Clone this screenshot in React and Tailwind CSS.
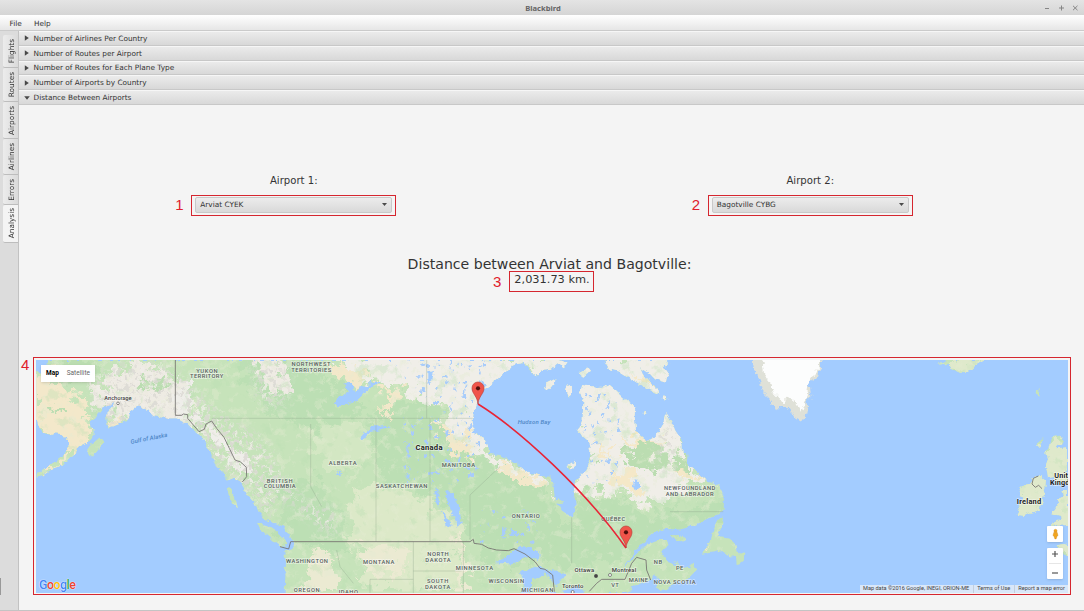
import React from 'react';

const TABS = [
  { name: 'Flights', size: 'h-[33px]' },
  { name: 'Routes', size: 'h-[34px]' },
  { name: 'Airports', size: 'h-[37px]' },
  { name: 'Airlines', size: 'h-[36px]' },
  { name: 'Errors', size: 'h-[30px]' },
  { name: 'Analysis', size: 'h-[38px]' },
];

const PANES = [
  'Number of Airlines Per Country',
  'Number of Routes per Airport',
  'Number of Routes for Each Plane Type',
  'Number of Airports by Country',
  'Distance Between Airports',
];

const MAINLAND =
  'M85 30 L78 62 L60 68 L48 60 L48 200 L62 245 L90 256 L105 250 L125 252 L145 275 L146 300 L128 318 L105 335 L80 355 L50 372 L50 384 L75 372 L100 355 L130 345 L150 322 L168 312 L170 292 L200 282 L224 250 L216 238 L212 212 L232 195 L246 178 L270 165 L283 154 L277 172 L262 188 L256 205 L262 236 L290 225 L322 212 L328 185 L350 168 L384 180 L400 198 L440 205 L470 205 L500 222 L520 242 L548 262 L560 290 L580 322 L590 348 L612 372 L620 392 L640 385 L665 398 L676 430 L700 455 L716 485 L735 510 L765 520 L790 530 L812 560 L822 590 L806 600 L792 600 L798 640 L794 729 L1826 729 L1838 712 L1860 700 L1895 690 L1900 676 L1925 690 L1908 705 L1918 726 L1938 720 L1960 698 L2000 690 L2030 660 L2018 635 L2008 655 L1985 662 L1968 645 L1942 635 L1930 612 L1926 600 L1946 585 L1938 570 L1910 570 L1880 582 L1855 605 L1838 626 L1810 655 L1848 600 L1878 568 L1905 545 L1935 537 L1985 538 L2020 526 L2060 507 L2095 492 L2110 480 L2112 442 L2095 405 L2070 398 L2040 375 L2018 355 L2000 345 L2002 315 L1985 300 L1984 270 L1965 240 L1956 215 L1940 190 L1930 205 L1926 232 L1908 258 L1885 272 L1862 262 L1848 238 L1844 195 L1846 168 L1810 145 L1790 125 L1766 105 L1740 114 L1688 102 L1680 125 L1690 158 L1688 208 L1672 245 L1704 272 L1712 310 L1704 350 L1685 375 L1665 392 L1662 430 L1668 470 L1655 502 L1630 488 L1605 450 L1600 400 L1590 380 L1560 378 L1520 364 L1480 338 L1440 315 L1405 312 L1402 290 L1390 262 L1362 250 L1358 212 L1362 180 L1378 155 L1372 130 L1405 110 L1435 85 L1470 50 L1490 42 L1520 38 L1535 30 Z';

const ISLANDS = [
  'M202 300 L212 285 L240 262 L250 275 L235 300 L215 320 Z',
  'M620 415 L640 418 L645 440 L654 475 L640 465 L628 445 Z',
  'M713 518 L745 528 L770 545 L797 570 L800 595 L770 580 L745 558 L722 540 Z',
  'M575 300 L595 310 L612 345 L630 380 L615 378 L595 345 L575 325 Z',
  'M1510 30 L1526 58 L1552 80 L1562 60 L1596 56 L1612 40 L1632 52 L1640 38 L1615 30 Z',
  'M1572 115 L1580 98 L1606 85 L1604 102 L1588 120 Z',
  'M1638 120 L1642 106 L1656 112 L1656 132 L1646 140 Z',
  'M1676 70 L1690 62 L1700 50 L1710 62 L1690 80 Z',
  'M1752 30 L1768 58 L1800 66 L1835 88 L1870 110 L1915 132 L1912 118 L1890 98 L1868 72 L1860 52 L1888 70 L1905 88 L1938 98 L1942 80 L1945 60 L1930 50 L1946 38 L1942 30 Z',
  'M1868 190 L1873 180 L1880 188 L1874 198 Z',
  'M1928 145 L1935 135 L1942 148 L1936 153 Z',
  'M1604 450 L1612 445 L1630 455 L1625 462 L1610 460 Z',
  'M1642 348 L1664 332 L1668 344 L1650 358 Z',
  'M1950 555 L1975 556 L1998 568 L1985 574 L1960 566 Z',
  'M1962 630 L1988 655 L2002 650 L2000 664 L1980 662 Z',
  'M2100 502 L2112 500 L2104 535 L2090 560 L2130 566 L2145 582 L2150 605 L2170 608 L2168 638 L2150 642 L2148 620 L2124 618 L2110 600 L2075 608 L2046 614 L2058 594 L2072 572 L2080 540 Z',
  'M2755 44 L2780 30 L2895 30 L2870 44 L2845 64 L2820 68 L2792 55 L2785 42 Z',
  'M3048 122 L3062 114 L3060 130 L3056 150 L3052 132 Z',
  'M3050 282 L3070 264 L3066 280 L3056 294 Z',
  'M3092 265 L3112 262 L3130 258 L3128 275 L3108 295 L3144 292 L3144 400 L3110 400 L3105 380 L3084 385 L3082 370 L3078 350 L3084 325 L3078 305 L3088 290 Z',
  'M3144 420 L3128 420 L3132 440 L3108 448 L3115 462 L3094 490 L3125 498 L3120 510 L3080 530 L3144 524 Z',
  'M3035 385 L3060 378 L3078 392 L3076 412 L3070 440 L3062 480 L3030 488 L3010 498 L2990 494 L3000 475 L2996 460 L3010 448 L2996 425 L3004 408 L3030 405 Z',
  'M3110 586 L3132 582 L3144 586 L3144 620 L3125 610 Z',
];

const GREENLAND =
  'M2197 30 L2205 70 L2220 90 L2225 125 L2250 150 L2265 178 L2285 170 L2310 178 L2325 200 L2345 213 L2358 195 L2364 165 L2362 150 L2374 140 L2370 110 L2362 98 L2385 90 L2392 68 L2405 50 L2405 20 L2197 20 Z';

const WATER = [
  'M938 165 L955 142 L985 128 L970 100 L985 95 L1005 120 L1030 112 L1055 96 L1082 92 L1075 102 L1045 112 L1020 142 L985 165 Z',
  'M1020 265 L1030 250 L1070 225 L1085 222 L1112 232 L1088 240 L1050 246 L1028 270 Z',
  'M1275 430 L1298 422 L1315 455 L1325 520 L1312 530 L1298 490 L1282 460 Z',
  'M1248 410 L1255 430 L1258 470 L1245 460 Z',
  'M1262 480 L1274 492 L1295 530 L1285 535 Z',
  'M1470 610 L1500 590 L1530 594 L1560 608 L1556 630 L1520 625 L1480 640 L1425 640 Z',
  'M1475 538 L1485 538 L1488 555 L1478 562 Z',
  'M1500 665 L1540 650 L1580 655 L1568 675 L1540 690 L1530 729 L1505 729 L1510 690 Z',
  'M1565 655 L1605 662 L1640 675 L1620 690 L1610 720 L1598 690 L1575 675 Z',
  'M1625 722 L1665 712 L1700 724 L1690 729 L1625 729 Z',
  'M1222 70 L1242 62 L1235 95 L1222 90 Z',
  'M1838 402 L1852 390 L1860 405 L1848 422 Z',
  'M950 368 L972 370 L965 375 L948 373 Z',
  'M1160 380 L1172 378 L1170 385 L1160 386 Z',
];

function Terrain() {
  return (
    <g clipPath="url(#land)">
      <rect x="48" y="30" width="3096" height="699" fill="#c6e3ba" />
      <g filter="url(#rough)">
        {/* dry plains */}
        <path fill="#dce9c8" d="M1000 410 L1100 400 L1200 440 L1300 500 L1340 560 L1300 600 L1330 729 L1050 729 L1000 580 L980 480 Z" />
        <path fill="#d3e7c3" d="M860 230 L1050 225 L1050 310 L1000 370 L900 330 Z" />
        <path fill="#ebead2" d="M875 600 L930 600 L960 640 L930 729 L840 729 Z M1030 590 L1120 590 L1160 640 L1100 690 L1010 650 Z M1310 560 L1330 560 L1340 729 L1310 729 Z" />
        {/* forests */}
        <path fill="#bcdfb4" d="M640 20 L820 20 L930 90 L1060 200 L860 230 L760 190 L700 150 Z M1100 160 L1250 130 L1250 240 L1400 330 L1560 410 L1610 500 L1700 560 L1700 660 L1400 640 L1330 500 L1200 420 L1080 380 L1060 250 Z M760 420 L900 390 L960 520 L990 620 L940 590 L850 590 L780 520 Z M1670 430 L1760 420 L1850 490 L2000 470 L2120 450 L2110 500 L1880 560 L1820 640 L1680 640 Z" />
        {/* tundra */}
        <path fill="#f0eee8" d="M955 10 L1560 10 L1440 100 L1370 170 L1365 240 L1420 310 L1560 370 L1600 410 L1480 380 L1390 320 L1250 230 L1270 170 L1190 140 L1060 90 L980 70 Z" />
        <path fill="#f0eee8" d="M1660 80 L1960 180 L2030 340 L2080 400 L1960 430 L1930 460 L1850 465 L1800 430 L1740 410 L1660 425 Z" />
        <path fill="#f0eee8" d="M1500 10 L1980 10 L1960 160 L1560 150 Z" />
        <path fill="#eeebe3" d="M270 80 L330 40 L410 50 L470 110 L540 170 L500 230 L380 210 L320 210 L270 150 L240 180 L210 150 Z M700 20 L800 20 L800 140 L740 120 Z" />
        <path fill="#efeeea" d="M500 180 L570 210 L640 290 L700 350 L670 370 L620 330 L550 250 Z M470 90 L510 130 L540 190 L480 210 Z" />
        {/* sandy lowlands */}
        <path fill="#f3e8ca" d="M30 90 L100 75 L160 115 L190 180 L225 240 L130 355 L40 390 L150 300 L70 250 L30 200 Z M250 200 L320 190 L310 230 L260 240 Z M915 35 L1010 55 L1040 95 L1000 105 L950 85 Z M1070 110 L1125 115 L1120 200 L1095 175 Z M1240 235 L1330 250 L1370 310 L1340 315 L1280 290 Z M1430 325 L1550 385 L1590 405 L1500 395 L1430 345 Z" />
        <path fill="#f5e8c8" d="M1820 255 L1920 275 L1900 295 L1860 295 Z M1790 350 L1850 360 L1860 420 L1830 440 L1795 390 Z M1980 350 L2040 365 L2040 400 L1990 390 Z M1730 300 L1790 270 L1780 285 L1745 310 Z M1850 70 L1900 100 L1890 120 L1860 100 Z M2050 604 L2080 598 L2075 610 Z" />
        <path fill="#bbddb1" d="M345 85 L400 80 L440 110 L420 130 L360 115 Z M95 175 L112 165 L118 200 L100 195 Z M130 20 L230 20 L190 90 L150 80 Z M1810 305 L1880 275 L1940 290 L1940 350 L1870 355 L1815 340 Z M1970 270 L2010 300 L2010 360 L1975 350 Z M1700 320 L1715 340 L1710 365 Z" />
        <path fill="#dfe9cb" d="M2970 350 L3180 230 L3180 640 L2970 520 Z M2740 20 L2910 20 L2860 90 Z" />
      </g>
      <rect x="48" y="30" width="3096" height="699" filter="url(#mottleLight)" />
      <rect x="48" y="30" width="3096" height="699" filter="url(#mottleGreen)" />
      <path filter="url(#relief)" d="M200 90 L300 40 H440 L600 190 L730 270 L800 400 L860 460 L950 480 V560 L900 530 L800 450 L760 460 V520 L700 450 L640 390 L480 230 L260 230 Z M690 30 H800 V170 L720 160 Z M1900 230 H1970 V370 H1930 Z" />
      <path filter="url(#lakes)" d="M1100 30 H1420 L1370 210 L1300 220 L1220 150 Z M1690 130 H1800 V400 H1690 Z M1150 200 H1380 V400 H1150 Z M1380 480 H1560 V580 H1380 Z" />
      <g fill="#a3ccff" filter="url(#roughFine)">
        {WATER.map((d) => <path key={d} d={d} />)}
      </g>
    </g>
  );
}

function Label({ x, y, w, children, size = 17.5, fill = '#56605b', anchor = 'middle', weight = 500, italic = false, rotate = 0 }) {
  return (
    <text
      x={x}
      y={y}
      textAnchor={anchor}
      fontSize={size}
      fontWeight={weight}
      fontStyle={italic ? 'italic' : 'normal'}
      fill={fill}
      textLength={w}
      transform={rotate ? `rotate(${rotate} ${x} ${y})` : undefined}
      stroke="#ffffff"
      strokeOpacity={italic ? 0 : 0.5}
      strokeWidth="4"
      paintOrder="stroke"
    >
      {children}
    </text>
  );
}

function Pin({ x, y }) {
  return (
    <g transform={`translate(${x} ${y})`}>
      <path d="M0 0 C-2 -24 -18 -30 -18 -48 A18 18 0 0 1 18 -48 C18 -30 2 -24 0 0 Z" fill="#f0544a" stroke="#b9403a" strokeWidth="2" />
      <circle cx="0" cy="-47" r="6.2" fill="#4f0f0b" />
    </g>
  );
}

function MapDrawing() {
  return (
    <svg viewBox="48 30 3096 699" preserveAspectRatio="none" className="block h-full w-full" fontFamily="Roboto, sans-serif">
      <defs>
        <clipPath id="land">
          <path d={MAINLAND} />
          {ISLANDS.map((d) => <path key={d} d={d} />)}
        </clipPath>
        <filter id="coast" x="0" y="0" width="1" height="1" colorInterpolationFilters="sRGB">
          <feTurbulence type="fractalNoise" baseFrequency="0.06" numOctaves="3" seed="3" result="n" />
          <feDisplacementMap in="SourceGraphic" in2="n" scale="16" xChannelSelector="R" yChannelSelector="G" />
        </filter>
        <filter id="rough" x="0" y="0" width="1" height="1" colorInterpolationFilters="sRGB">
          <feTurbulence type="fractalNoise" baseFrequency="0.024" numOctaves="5" seed="8" result="n" />
          <feDisplacementMap in="SourceGraphic" in2="n" scale="120" xChannelSelector="R" yChannelSelector="G" />
          <feGaussianBlur stdDeviation="2" />
        </filter>
        <filter id="roughFine" colorInterpolationFilters="sRGB">
          <feTurbulence type="fractalNoise" baseFrequency="0.06" numOctaves="2" seed="5" result="n" />
          <feDisplacementMap in="SourceGraphic" in2="n" scale="14" xChannelSelector="R" yChannelSelector="G" />
        </filter>
        <filter id="mottleLight" x="0" y="0" width="1" height="1" colorInterpolationFilters="sRGB">
          <feTurbulence type="fractalNoise" baseFrequency="0.035" numOctaves="4" seed="21" />
          <feColorMatrix values="0 0 0 0 0.89  0 0 0 0 0.92  0 0 0 0 0.82  7 0 0 0 -3.95" />
          <feComponentTransfer><feFuncA type="linear" slope="0.4" /></feComponentTransfer>
        </filter>
        <filter id="mottleGreen" x="0" y="0" width="1" height="1" colorInterpolationFilters="sRGB">
          <feTurbulence type="fractalNoise" baseFrequency="0.025" numOctaves="4" seed="46" />
          <feColorMatrix values="0 0 0 0 0.72  0 0 0 0 0.87  0 0 0 0 0.69  0 7 0 0 -4.1" />
          <feComponentTransfer><feFuncA type="linear" slope="0.35" /></feComponentTransfer>
        </filter>
        <filter id="relief" x="0" y="0" width="1" height="1" colorInterpolationFilters="sRGB">
          <feTurbulence type="fractalNoise" baseFrequency="0.07" numOctaves="3" seed="12" result="n" />
          <feColorMatrix in="n" values="0 0 0 0 0.86  0 0 0 0 0.85  0 0 0 0 0.83  9 0 0 0 -4.9" result="shade" />
          <feColorMatrix in="n" values="0 0 0 0 0.94  0 0 0 0 0.93  0 0 0 0 0.91  0 7 0 0 -3.8" result="snow" />
          <feMerge result="both"><feMergeNode in="snow" /><feMergeNode in="shade" /></feMerge>
          <feGaussianBlur in="SourceGraphic" stdDeviation="16" result="soft" />
          <feComposite in="both" in2="soft" operator="in" result="hills" />
          <feComponentTransfer in="hills"><feFuncA type="linear" slope="0.85" /></feComponentTransfer>
        </filter>
        <filter id="lakes" x="0" y="0" width="1" height="1" colorInterpolationFilters="sRGB">
          <feTurbulence type="fractalNoise" baseFrequency="0.07 0.055" numOctaves="2" seed="30" />
          <feColorMatrix values="0 0 0 0 0.66  0 0 0 0 0.80  0 0 0 0 0.98  0 0 14 0 -9.1" />
          <feComposite in2="SourceGraphic" operator="in" />
        </filter>
      </defs>
      <rect x="48" y="30" width="3096" height="699" fill="#a3ccff" />
      <g filter="url(#coast)">
        <Terrain />
        <g filter="url(#roughFine)">
          <path d={GREENLAND} fill="#dfe1d8" />
          <path d="M2225 20 L2232 70 L2250 95 L2262 130 L2290 160 L2305 140 L2325 155 L2345 185 L2358 150 L2366 100 L2380 78 L2400 40 L2400 20 Z" fill="#fcfdfd" />
        </g>
      </g>
      {/* keeps the shores solid along the frame's edges */}
      <path d="M48 72 V198" stroke="#e9e6cd" strokeWidth="6" />
      <path d="M800 727 H1500" stroke="#cfe4bf" strokeWidth="5" />

      {/* province and state lines */}
      <g fill="none" stroke="#8fa78d" strokeWidth="1.5" opacity="0.7">
        <path d="M575 205 H1358 M872 222 V410 L905 470 M1068 205 V575 M1230 205 V575 M1220 30 V205 M1350 435 L1440 350 M1350 435 V570 M1180 575 V729 M1180 663 H1325 M1050 688 H1180 M1050 688 V729 M1330 575 V729 M1655 502 V640 M1950 485 H2110 M950 600 L960 650 L1000 700" />
      </g>
      <g fill="none" stroke="#757371" strokeWidth="2.6">
        <path d="M466 30 V196 L485 196 L490 192 L503 194 L503 205 L520 225 L537 245 L553 238 L558 222 L575 213 L590 235 L612 262 L628 295 L645 330 L662 336 L679 352 L680 380 L667 396" />
        <path d="M780 590 L806 597 L812 575 H1350 L1360 568 L1362 580 L1385 583 L1405 594 L1430 600 L1465 602 L1482 596 L1515 612 L1545 635 L1560 655 L1575 658 L1598 675 L1603 725 M1708 724 L1730 700 L1745 688 H1815 L1835 640 L1850 622 L1878 630 L1880 660 L1892 690" />
        <path d="M3055 378 L3040 385 L3036 402 L3046 412 L3056 406 L3066 416" />
      </g>

      <g>
        <Label x={561} y={69} w={64}>YUKON</Label>
        <Label x={560} y={85} w={100}>TERRITORY</Label>
        <Label x={873} y={49} w={117}>NORTHWEST</Label>
        <Label x={874} y={65} w={120}>TERRITORIES</Label>
        <Label x={779} y={398} w={78}>BRITISH</Label>
        <Label x={779} y={414} w={96}>COLUMBIA</Label>
        <Label x={968} y={344} w={83}>ALBERTA</Label>
        <Label x={1145} y={415} w={155}>SASKATCHEWAN</Label>
        <Label x={1315} y={352} w={100}>MANITOBA</Label>
        <Label x={1517} y={505} w={84}>ONTARIO</Label>
        <Label x={1780} y={512} w={72}>QUÉBEC</Label>
        <Label x={2009} y={420} w={154}>NEWFOUNDLAND</Label>
        <Label x={2009} y={437} w={144}>AND LABRADOR</Label>
        <Label x={861} y={639} w={126}>WASHINGTON</Label>
        <Label x={1076} y={641} w={94}>MONTANA</Label>
        <Label x={1254} y={619} w={64}>NORTH</Label>
        <Label x={1254} y={635} w={76}>DAKOTA</Label>
        <Label x={1253} y={700} w={64}>SOUTH</Label>
        <Label x={1253} y={716} w={76}>DAKOTA</Label>
        <Label x={1363} y={661} w={112}>MINNESOTA</Label>
        <Label x={1459} y={700} w={107}>WISCONSIN</Label>
        <Label x={1552} y={726} w={96}>MICHIGAN</Label>
        <Label x={860} y={726} w={78}>OREGON</Label>
        <Label x={985} y={731} w={58}>IDAHO</Label>
        <Label x={1914} y={641} w={25}>NB</Label>
        <Label x={1979} y={661} w={22}>PE</Label>
        <Label x={1855} y={695} w={58}>MAINE</Label>
        <Label x={1785} y={710} w={23}>VT</Label>
        <Label x={1964} y={701} w={126}>NOVA SCOTIA</Label>
        <Label x={294} y={151} w={82} size={17.5} fill="#3b3b3b">Anchorage</Label>
        <Label x={1693} y={666} w={59} size={18} fill="#3b3b3b">Ottawa</Label>
        <Label x={1812} y={666} w={73} size={18} fill="#3b3b3b">Montreal</Label>
        <Label x={1658} y={715} w={64} size={18} fill="#3b3b3b">Toronto</Label>
        <Label x={1227} y={299} w={81} size={23} weight={700} fill="#1d1d1d">Canada</Label>
        <Label x={3027} y={461} w={73} size={22.5} weight={700} fill="#1d1d1d">Ireland</Label>
        <Label x={3103} y={383} w={66} size={22} weight={700} anchor="start" fill="#1d1d1d">United</Label>
        <Label x={3090} y={405} w={90} size={22} weight={700} anchor="start" fill="#1d1d1d">Kingdom</Label>
        <Label x={388} y={271} w={112} size={18} italic rotate={-11} fill="#4d86c6">Gulf of Alaska</Label>
        <Label x={1542} y={223} w={98} size={18} italic fill="#4d86c6">Hudson Bay</Label>
      </g>
      <g fill="#fff" stroke="#555" strokeWidth="2">
        <circle cx="294" cy="160" r="4" />
        <circle cx="1770" cy="675" r="4.5" />
        <circle cx="1658" cy="726" r="4.5" />
        <circle cx="1728" cy="678" r="5" fill="#444" />
      </g>

      <path d="M1374 162 C1500 240 1700 425 1818 594" fill="none" stroke="#e92436" strokeWidth="4.6" />
      <Pin x={1374} y={162} />
      <Pin x={1818} y={594} />
    </svg>
  );
}

function Caret({ open }) {
  return (
    <svg viewBox="0 0 6 6" className="h-[6px] w-[6px] shrink-0" fill="#484848">
      <path d={open ? 'M.2 1.2 H5.8 L3 4.8 Z' : 'M.8 .2 V5.8 L4.8 3 Z'} />
    </svg>
  );
}

function AirportPicker({ title, value, mark }) {
  return (
    <div className="flex flex-col items-center">
      <div className="h-[21px] pl-px text-[10.1px] leading-[13px] text-[#333]">{title}</div>
      <div className="relative ml-px flex h-[21px] w-[205px] border border-[#d5262f] px-[3px] py-px">
        <span className="absolute top-0 -left-[17px] font-['Liberation_Sans',sans-serif] text-[15px] leading-[17px] text-[#e0202c]">{mark}</span>
        <div className="flex h-[16px] w-full items-center justify-between rounded-[2px] border border-[#c9c9c9] bg-linear-to-b from-[#ececec] to-[#d9d9d9] pr-[4px] pb-px pl-[4px] text-[7.35px] leading-none text-[#333]">
          <span>{value}</span>
          <svg viewBox="0 0 5 3" className="h-[3px] w-[5px]"><path d="M0 0 H5 L2.5 3 Z" fill="#4a4a4a" /></svg>
        </div>
      </div>
    </div>
  );
}

export default function App() {
  return (
    <div className="flex h-[611px] w-[1084px] flex-col overflow-hidden bg-[#f4f4f4] font-['DejaVu_Sans',sans-serif] text-[#333]">
      <header className="grid h-[15px] shrink-0 grid-cols-[1fr_auto_1fr] items-center bg-linear-to-b from-[#e4e4e4] to-[#d5d5d5]">
        <span />
        <span className="pt-[2px] pl-[2px] font-['Noto_Sans',sans-serif] text-[7.6px] leading-none font-bold text-[#666]">Blackbird</span>
        <svg viewBox="0 0 34 6" className="mr-[6px] h-[6px] w-[34px] justify-self-end" fill="none" stroke="#858585" strokeWidth="1">
          <path d="M1 3.5 H5 M15 3 H20 M17.5 .5 V5.5 M29 .8 L33.5 5.2 M33.5 .8 L29 5.2" />
        </svg>
      </header>
      <nav className="flex h-[16px] shrink-0 items-center gap-[12px] border-b border-[#cbcbcb] bg-linear-to-b from-white to-[#e6e6e6] pt-[2px] pl-[9.6px] text-[7.35px] leading-none">
        <span>File</span>
        <span>Help</span>
      </nav>
      <div className="flex min-h-0 flex-1 border-b border-[#c4c4c4]">
        <aside className="flex w-[19px] shrink-0 flex-col border-r border-[#c2c2c2] bg-[#dcdcdc] pt-[4px] pl-[3px]">
          {TABS.map((t) => (
            <div
              key={t.name}
              className={`${t.size} flex shrink-0 items-center justify-center rounded-l-[2px] border-b border-[#bdbdbd] pl-[2px] ${t.name === 'Analysis' ? 'bg-[#f4f4f4]' : 'bg-linear-to-r from-[#ececec] to-[#dadada]'}`}
            >
              <span className="rotate-180 text-[7.35px] leading-none [writing-mode:vertical-rl]">{t.name}</span>
            </div>
          ))}
          <div className="mt-auto mb-[15px] -ml-[3px] h-[17px] w-px bg-[#999]" />
        </aside>
        <main className="flex min-w-0 flex-1 flex-col">
          {PANES.map((p, i) => (
            <div key={p} className="flex h-[14.8px] shrink-0 items-center gap-[4px] border-t border-b border-t-[#f6f6f6] border-b-[#c8c8c8] bg-linear-to-b from-[#ebebeb] to-[#d8d8d8] pl-[4.5px] text-[7.35px] leading-none">
              <Caret open={i === 4} />
              <span>{p}</span>
            </div>
          ))}
          <section className="flex flex-1 flex-col px-[14px] pt-[69px]">
            <div className="grid grid-cols-2 px-[2px]">
              <AirportPicker title="Airport 1:" value="Arviat CYEK" mark="1" />
              <AirportPicker title="Airport 2:" value="Bagotville CYBG" mark="2" />
            </div>
            <div className="mt-[40px] flex flex-col items-center">
              <div className="mr-[4px] h-[15px] text-[14.1px] leading-[17px]">Distance between Arviat and Bagotville:</div>
              <div className="relative flex h-[21px] w-[85px] justify-center border border-[#d5262f] pl-px text-[11.35px] leading-[15px]">
                <span className="absolute top-0 -left-[17px] font-['Liberation_Sans',sans-serif] text-[15px] leading-[19px] text-[#e0202c]">3</span>
                2,031.73 km.
              </div>
            </div>
            <div className="relative mt-[65px] h-[238px] w-[1038px] border border-[#d5262f] p-[2px]">
              <span className="absolute -top-px -left-[13px] font-['Liberation_Sans',sans-serif] text-[15px] leading-[16px] text-[#e0202c]">4</span>
              <div className="relative h-[233px] w-[1032px] overflow-hidden font-['Roboto',sans-serif]">
                <MapDrawing />
                <div className="absolute top-[5px] left-[5px] flex h-[17px] w-[54px] items-center justify-between bg-white px-[5px] text-[6.5px] leading-none shadow-sm">
                  <span className="font-bold text-black">Map</span>
                  <span className="text-[#666]">Satellite</span>
                </div>
                <div className="absolute bottom-[2px] left-[3px] text-[12.4px] leading-[13px] font-medium tracking-[-0.5px] [text-shadow:0_0_1px_#fff,0_0_1px_#fff]">
                  <span className="text-[#4285f4]">G</span>
                  <span className="text-[#ea4335]">o</span>
                  <span className="text-[#fbbc05]">o</span>
                  <span className="text-[#4285f4]">g</span>
                  <span className="text-[#34a853]">l</span>
                  <span className="text-[#ea4335]">e</span>
                </div>
                <div className="absolute right-[5px] bottom-[14px] flex w-[16px] flex-col gap-[6px]">
                  <div className="flex h-[16px] items-center justify-center rounded-[1px] bg-white shadow-sm">
                    <svg viewBox="0 0 8 12" className="h-[12px] w-[7px]" fill="#f2a51f" stroke="#c98213" strokeWidth=".4">
                      <circle cx="4" cy="2.4" r="1.8" />
                      <path d="M2.2 4 H5.8 L6.9 7.8 L5.8 8.4 L4.7 11.6 H3.3 L2.2 8.4 L1.1 7.8 Z" />
                    </svg>
                  </div>
                  <div className="flex h-[31px] flex-col items-center justify-around rounded-[1px] bg-white shadow-sm">
                    <svg viewBox="0 0 6 6" className="h-[6px] w-[6px]" stroke="#555" strokeWidth="1.2"><path d="M0 3 H6 M3 0 V6" /></svg>
                    <div className="h-px w-[12px] bg-[#e6e6e6]" />
                    <svg viewBox="0 0 6 6" className="h-[6px] w-[6px]" stroke="#555" strokeWidth="1.2"><path d="M0 3 H6" /></svg>
                  </div>
                </div>
                <div className="absolute right-0 bottom-0 flex h-[8px] w-[208px] items-center bg-[#dfeaf8]/90 pr-[3px] pl-[3px] text-[5.6px] leading-none whitespace-nowrap text-[#444]">
                  <span>Map data ©2016 Google, INEGI, ORION-ME</span>
                  <span className="mx-auto h-full w-px bg-[#c4cfdc]" />
                  <span>Terms of Use</span>
                  <span className="mx-auto h-full w-px bg-[#c4cfdc]" />
                  <span>Report a map error</span>
                </div>
              </div>
            </div>
          </section>
        </main>
      </div>
    </div>
  );
}
